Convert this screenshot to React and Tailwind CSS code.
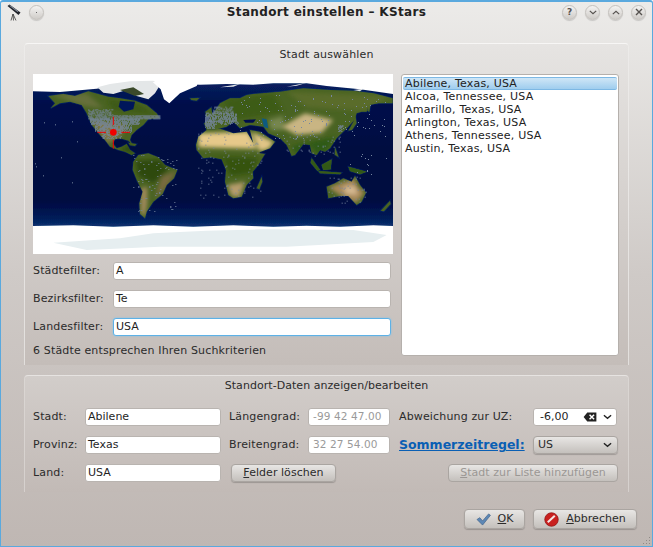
import React from 'react';

const font = { fontFamily: '"DejaVu Sans", sans-serif' };

// map shapes use the 1080x540 space of the viewBox
const landPaths = [
  // north america
  'M85,78 L130,72 L165,78 L205,64 L235,72 L265,80 L300,85 L345,92 L380,105 L410,130 L420,145 L385,148 L370,165 L350,180 L335,195 L330,210 L338,225 L325,212 L300,205 L285,208 L278,220 L290,235 L305,230 L320,222 L330,240 L345,250 L335,255 L315,245 L295,240 L270,230 L255,210 L240,195 L215,165 L200,130 L185,105 L150,95 L120,100 L92,115 L105,100 Z',
  // south america
  'M340,275 L355,255 L385,250 L415,262 L435,285 L472,300 L462,325 L440,345 L428,372 L400,395 L380,425 L375,445 L360,432 L358,400 L368,365 L350,330 L338,300 Z',
  // africa
  'M528,225 L535,200 L560,180 L600,176 L640,190 L680,185 L700,220 L720,250 L735,252 L715,285 L698,305 L700,325 L680,345 L665,380 L640,385 L625,375 L615,335 L618,300 L605,268 L575,262 L550,265 L530,240 Z',
  // arabia
  'M690,180 L720,185 L765,215 L750,235 L715,248 L700,220 Z',
  // eurasia
  'M552,160 L565,150 L580,128 L600,100 L630,85 L660,85 L680,75 L700,72 L780,65 L850,55 L930,60 L1000,62 L1060,70 L1118,85 L1118,100 L1075,100 L1045,105 L1040,125 L1025,125 L1010,130 L1003,150 L985,170 L965,190 L950,205 L930,235 L915,245 L900,240 L890,255 L875,250 L870,225 L850,222 L825,255 L815,258 L800,225 L780,205 L745,190 L730,170 L690,165 L660,175 L640,155 L620,170 L590,178 L560,180 Z',
  // australia
  'M920,350 L945,340 L970,325 L995,335 L1005,318 L1020,345 L1038,368 L1025,395 L1010,405 L985,378 L960,378 L925,385 Z',
  // islands
  'M710,355 L725,320 L727,335 L718,358 Z',
  'M875,265 L900,300 L892,302 L872,278 Z',
  'M905,285 L935,268 L932,298 L910,300 Z',
  'M895,303 L965,308 L960,313 L900,310 Z',
  'M985,290 L1040,305 L1020,313 L990,303 Z',
  'M945,230 L956,262 L944,254 Z',
  'M996,180 L1010,160 L1006,135 L1000,155 L985,182 Z',
  'M1045,100 L1052,102 L1048,126 L1042,122 Z',
  'M1082,422 L1110,392 L1112,402 L1092,424 Z',
  'M510,85 L538,84 L530,92 L514,90 Z',
  'M556,125 L574,112 L578,140 L558,142 Z',
  'M325,218 L350,222 L345,228 L330,226 Z',
];

const patches = [
  { fill: '#66703a', d: 'M90,72 L200,70 L250,115 L190,108 Z' },
  { fill: '#3d5a14', d: 'M260,88 L350,100 L410,135 L280,120 Z' },
  { fill: '#7e7746', d: 'M215,150 L320,165 L300,200 L262,222 L232,180 Z' },
  { fill: '#2f4e0c', d: 'M330,222 L350,255 L300,240 Z' },
  { fill: '#2e480a', d: 'M345,272 L420,268 L445,300 L400,340 L355,318 Z' },
  { fill: '#7a6a40', d: 'M425,320 L470,302 L440,350 L405,385 Z' },
  { fill: '#a08a5c', d: 'M362,355 L382,350 L382,400 L375,440 L362,428 Z' },
  { fill: '#e6c98a', d: 'M535,190 L685,185 L712,236 L535,232 Z' },
  { fill: '#34520c', d: 'M550,258 L715,264 L695,310 L630,318 L610,268 Z' },
  { fill: '#b59c6c', d: 'M622,345 L675,335 L658,382 L634,378 Z' },
  { fill: '#e0c486', d: 'M695,185 L762,216 L745,238 L718,244 Z' },
  { fill: '#3d5c14', d: 'M605,90 L760,72 L790,125 L650,148 Z' },
  { fill: '#5a6c2c', d: 'M800,65 L1110,78 L1035,122 L860,112 Z' },
  { fill: '#c9b583', d: 'M785,170 L855,130 L940,150 L905,188 L830,195 Z' },
  { fill: '#76864e', d: 'M745,150 L790,138 L790,180 L752,180 Z' },
  { fill: '#2f5a12', d: 'M815,228 L945,200 L918,245 L890,252 L870,225 L828,252 Z' },
  { fill: '#305816', d: 'M860,262 L1040,285 L1040,318 L880,310 Z' },
  { fill: '#a8895a', d: 'M925,352 L1002,325 L1034,370 L1008,400 L960,376 Z' },
  { fill: '#d4b890', d: 'M970,350 L1006,348 L1012,374 L978,372 Z' },
  { fill: '#3a5812', d: 'M1003,322 L1020,346 L1034,366 L1012,350 Z' },
];

const arctic = [
  'M232,52 L270,42 L330,34 L400,32 L420,45 L405,70 L385,88 L350,78 L320,60 L280,72 L250,68 Z',
  'M1000,60 L1030,56 L1020,64 Z',
  'M600,52 L660,42 L640,50 Z',
  'M800,50 L860,38 L830,47 Z',
];

// small fixed random so the city dots stay put between renders
function rnd(seed) {
  let s = seed;
  return () => {
    s = (s * 16807) % 2147483647;
    return s / 2147483647;
  };
}

function cityDots() {
  const r = rnd(4711);
  const out = [];
  const grid = (x, y, w, h, chance) => {
    for (let gy = y; gy < y + h; gy += 3) {
      for (let gx = x; gx < x + w; gx += 3) {
        if (r() < chance) out.push([gx, gy]);
      }
    }
  };
  // usa and southern canada
  grid(205, 118, 75, 30, 0.6);
  grid(280, 136, 140, 10, 0.85);
  grid(210, 146, 150, 18, 0.8);
  grid(225, 164, 110, 22, 0.65);
  grid(245, 186, 60, 20, 0.4);
  // europe
  grid(580, 110, 60, 20, 0.45);
  grid(555, 128, 95, 25, 0.7);
  grid(555, 152, 30, 22, 0.75);
  grid(585, 152, 70, 12, 0.4);
  // japan, korea
  grid(955, 165, 15, 20, 0.6);
  // everywhere else, thin
  grid(660, 75, 440, 130, 0.018);
  grid(800, 200, 160, 60, 0.05);
  grid(535, 185, 190, 200, 0.03);
  grid(340, 255, 130, 170, 0.025);
  grid(920, 320, 120, 85, 0.03);
  grid(45, 100, 140, 250, 0.004);
  grid(960, 240, 140, 80, 0.012);
  return out;
}

const dots = cityDots();

const WorldMap = () => (
  <svg viewBox="39 12 1080 540" className="w-[360px] h-[180px] block shrink-0">
    <defs>
      <linearGradient id="sea" x1="0" y1="0" x2="0" y2="1">
        <stop offset="0" stopColor="#08215f" />
        <stop offset="0.15" stopColor="#020d4a" />
        <stop offset="0.45" stopColor="#010941" />
        <stop offset="0.82" stopColor="#010941" />
        <stop offset="0.94" stopColor="#031c58" />
        <stop offset="1" stopColor="#083270" />
      </linearGradient>
      <clipPath id="land">
        {landPaths.map((d, i) => (
          <path key={i} d={d} />
        ))}
      </clipPath>
      <filter id="soft" x="-5%" y="-5%" width="110%" height="110%">
        <feGaussianBlur stdDeviation="7" />
      </filter>
      <filter id="edge" x="-5%" y="-5%" width="110%" height="110%">
        <feGaussianBlur stdDeviation="1.2" />
      </filter>
      <filter id="halo" x="-5%" y="-5%" width="110%" height="110%">
        <feGaussianBlur stdDeviation="2" />
      </filter>
    </defs>
    <rect x="39" y="12" width="1080" height="540" fill="#ffffff" />
    <g filter="url(#edge)">
      <path d="M39,64 L120,66 L230,56 L300,44 L420,40 L540,44 L620,42 L700,44 L760,40 L860,40 L920,48 L1020,58 L1119,72 L1119,468 L1060,466 L960,470 L860,467 L760,470 L640,466 L520,470 L400,466 L280,470 L160,466 L39,468 Z" fill="url(#sea)" />
      <g filter="url(#halo)" fill="none" stroke="#0a4a8a" strokeWidth="5" opacity="0.3">
        {landPaths.map((d, i) => (
          <path key={i} d={d} />
        ))}
      </g>
      {landPaths.map((d, i) => (
        <path key={i} d={d} fill="#4a6420" />
      ))}
    </g>
    <g clipPath="url(#land)">
      <g filter="url(#soft)">
        {patches.map((p, i) => (
          <path key={i} d={p.d} fill={p.fill} />
        ))}
      </g>
    </g>
    <g filter="url(#edge)">
      {arctic.map((d, i) => (
        <path key={i} d={d} fill="#e4e7e8" />
      ))}
      <path d="M300,60 L340,52 L372,72 L345,78 Z" fill="#3a4a2a" />
      <path d="M300,92 L345,95 L340,118 L312,125 L296,110 Z" fill="#06185a" />
      <path d="M670,150 L708,148 L700,158 L676,158 Z" fill="#04104c" />
      <path d="M725,145 L740,148 L745,175 L732,172 Z" fill="#0d5a80" />
      <path d="M398,36 L470,30 L535,35 L530,48 L480,70 L448,100 L432,88 L422,58 Z" fill="#ffffff" />
      <path d="M100,518 L300,505 L400,490 L560,482 L720,478 L1000,480 L1100,495 L1060,516 L800,530 L420,530 L200,540 Z" fill="#e6eef0" />
    </g>
    {dots.map(([x, y], i) => (
      <rect key={i} x={x} y={y} width="3" height="3" fill="#76869f" />
    ))}
    <path d="M232,187 H258 M304,187 H330 M280,140 V165 M280,210 V236" stroke="#f00000" strokeWidth="3" />
    <circle cx="280" cy="187" r="10" fill="#f00000" />
  </svg>
);

const Chevron = ({ up, className }) => (
  <svg viewBox="0 0 10 6" className={className} fill="none" stroke="currentColor" strokeWidth="1.5">
    <path d={up ? 'M1,5 L5,1.5 L9,5' : 'M1,1 L5,4.5 L9,1'} />
  </svg>
);

const WinButton = ({ children }) => (
  <div className="w-[15px] h-[15px] rounded-full border border-[#c4c1bd] bg-gradient-to-b from-[#f4f3f2] to-[#cfccc8] flex items-center justify-center text-[#55514e] shadow-[0_1px_1px_rgba(0,0,0,0.15)]">
    {children}
  </div>
);

const Telescope = () => (
  <svg viewBox="0 0 14 17" className="w-[14px] h-[17px]">
    <path d="M0.5,2 L2.5,0.5 L13.5,8.6 L11.5,11 Z" fill="#20232a" />
    <path d="M2,1.6 L3.5,1.4 L11.5,7.4 L10.5,8 Z" fill="#8b93a0" />
    <path d="M6,10 L4,16.5 M6,10 L6.5,16.5 M6,10 L9,16.5" stroke="#3a3a3a" strokeWidth="0.8" fill="none" />
  </svg>
);

const Field = ({ value, w, muted, focus }) => (
  <div
    className={`h-[18px] ${w} rounded-[3px] bg-white flex items-center overflow-hidden whitespace-nowrap ${muted ? 'pl-[4px] text-[10.5px] text-[#9a9a9a] tracking-[0.1px]' : 'pl-[2px] text-[11px] text-[#1f1f1f]'} ${focus ? 'border border-[#5db1e6] shadow-[0_0_2px_#7cc3ee]' : 'border border-[#b9b4b0]'}`}
  >
    {value}
  </div>
);

const Label = ({ children, className = '' }) => (
  <div className={`text-[11px] tracking-[0.15px] text-[#2b2b2b] leading-[18px] whitespace-nowrap ${className}`}>{children}</div>
);

const Btn = ({ children, className = '' }) => (
  <div className={`rounded-[4px] border border-[#aaa5a1] bg-gradient-to-b from-[#e8e6e4] to-[#c4c0bc] flex items-center justify-center text-[11px] tracking-[0.05px] whitespace-nowrap shadow-[0_1px_1px_rgba(0,0,0,0.2)] ${className}`}>
    {children}
  </div>
);

const cities = ['Abilene, Texas, USA', 'Alcoa, Tennessee, USA', 'Amarillo, Texas, USA', 'Arlington, Texas, USA', 'Athens, Tennessee, USA', 'Austin, Texas, USA'];

const filters = [
  ['Städtefilter:', 'A'],
  ['Bezirksfilter:', 'Te'],
  ['Landesfilter:', 'USA'],
];

export default function App() {
  return (
    <div style={font} className="relative w-[653px] h-[547px] overflow-hidden border-x border-b border-t-2 border-[#5aa9de] rounded-t-[3px] bg-gradient-to-b from-[#ecebe9] via-[#cfcac7] to-[#bfb7b3] flex flex-col text-[#2b2b2b]">
      {/* title bar */}
      <div className="h-[20px] grid grid-cols-[1fr_auto_1fr] items-center pl-[6px] pr-[6px] shrink-0">
        <div className="flex items-center">
          <Telescope />
          <div className="ml-[8px]">
            <WinButton><div className="w-[1px] h-[1px] bg-[#666]" /></WinButton>
          </div>
        </div>
        <div className="font-bold text-[12px] tracking-[0.35px] text-[#222] whitespace-nowrap">Standort einstellen – KStars</div>
        <div className="flex gap-[8px] justify-end">
          <WinButton><span className="text-[9px] font-bold leading-none">?</span></WinButton>
          <WinButton><Chevron className="w-[8px] h-[5px]" /></WinButton>
          <WinButton><Chevron up className="w-[8px] h-[5px]" /></WinButton>
          <WinButton>
            <svg viewBox="0 0 8 8" className="w-[8px] h-[8px]" stroke="currentColor" strokeWidth="1.4"><path d="M1,1 L7,7 M7,1 L1,7" /></svg>
          </WinButton>
        </div>
      </div>

      {/* city picker panel */}
      <div className="ml-[23px] mr-[23px] mt-[21px] h-[322px] shrink-0 rounded-t-[4px] border-t border-x border-t-[#f7f6f5] border-x-[#f0eeec]/70 bg-gradient-to-b from-[#e6e4e2] to-[#c4bdb9] px-[8px]">
        <div className="h-[20px] mt-[1px] text-center text-[11px] tracking-[0.15px] leading-[20px]">Stadt auswählen</div>
        <div className="flex gap-[8px] mt-[9px]">
          <div className="w-[360px] shrink-0">
            <WorldMap />
            <div className="mt-[8px] flex flex-col gap-[10px]">
              {filters.map(([label, value], i) => (
                <div key={label} className="flex items-center">
                  <Label className="w-[80px]">{label}</Label>
                  <Field value={value} w="w-[278px]" focus={i === 2} />
                </div>
              ))}
            </div>
            <Label className="mt-[6px]">6 Städte entsprechen Ihren Suchkriterien</Label>
          </div>
          <div className="w-[218px] h-[282px] rounded-[3px] border border-[#b5b0ac] bg-white pt-[2px] px-[1px] text-[11px] tracking-[0.2px] leading-[13px] text-[#222]">
            {cities.map((c, i) => (
              <div key={c} className={`px-[2px] h-[13px] whitespace-nowrap ${i === 0 ? 'rounded-[2px] border-y border-[#7db8e4] bg-gradient-to-b from-[#cfe6f6] to-[#9fcdee] flex items-center' : ''}`}>{c}</div>
            ))}
          </div>
        </div>
      </div>

      {/* location data panel */}
      <div className="ml-[23px] mr-[23px] mt-[10px] h-[117px] shrink-0 rounded-t-[4px] border-t border-x border-t-[#e6e3e1] border-x-[#dedad7]/70 bg-gradient-to-b from-[#d2cdca] to-[#c2bab6] px-[8px]">
        <div className="h-[20px] text-center text-[11px] tracking-[0.05px] leading-[20px]">Standort-Daten anzeigen/bearbeiten</div>
        <div className="mt-[12px] grid grid-cols-[52px_144px_79px_91px_134px_85px] grid-rows-[18px_18px_18px] gap-y-[10px]">
          <Label>Stadt:</Label>
          <Field value="Abilene" w="w-[136px]" />
          <Label>Längengrad:</Label>
          <Field value="-99 42 47.00" w="w-[82px]" muted />
          <Label>Abweichung zur UZ:</Label>
          <div className="h-[18px] w-[84px] rounded-[3px] bg-white border border-[#b9b4b0] flex items-center pl-[6px] pr-[4px] text-[11px] text-[#1f1f1f]">
            <span className="flex-1">-6,00</span>
            <svg viewBox="0 0 15 11" className="w-[14px] h-[10px] mr-[6px]">
              <path d="M0.5,5.5 L4.5,0.5 H14.5 V10.5 H4.5 Z" fill="#222" />
              <path d="M7,3 L12,8 M12,3 L7,8" stroke="#fff" strokeWidth="1.6" />
            </svg>
            <Chevron className="w-[9px] h-[6px] text-[#222]" />
          </div>

          <Label>Provinz:</Label>
          <Field value="Texas" w="w-[136px]" />
          <Label>Breitengrad:</Label>
          <Field value="32 27 54.00" w="w-[82px]" muted />
          <div className="text-[12.5px] font-bold underline text-[#0a5fb4] leading-[18px] whitespace-nowrap">Sommerzeitregel:</div>
          <Btn className="w-[85px] h-[18px] !justify-between pl-[4px] pr-[5px]">
            <span>US</span>
            <Chevron className="w-[9px] h-[6px] text-[#222]" />
          </Btn>

          <Label>Land:</Label>
          <Field value="USA" w="w-[136px]" />
          <Btn className="col-span-2 w-[105px] h-[18px] ml-[2px]"><span><u>F</u>elder löschen</span></Btn>
          <div className="col-span-2 flex justify-end">
            <Btn className="w-[170px] h-[18px] text-[#9b9794] !shadow-none"><span><u>S</u>tadt zur Liste hinzufügen</span></Btn>
          </div>
        </div>
      </div>

      {/* dialog buttons */}
      <div className="mt-[17px] pr-[15px] flex justify-end gap-[8px]">
        <Btn className="w-[61px] h-[20px] gap-[7px]">
          <svg viewBox="0 0 16 14" className="w-[15px] h-[13px]">
            <path d="M1,7 L4,5 L7,8.5 L13.5,1 L15.5,2.5 L7,13 Z" fill="#5c87b5" stroke="#3c5f86" strokeWidth="0.7" />
          </svg>
          <span><u>O</u>K</span>
        </Btn>
        <Btn className="w-[104px] h-[20px] gap-[7px]">
          <svg viewBox="0 0 16 16" className="w-[15px] h-[15px]">
            <circle cx="8" cy="8" r="7.2" fill="#c9201f" stroke="#8f1414" strokeWidth="0.8" />
            <path d="M4,11 L11.5,4" stroke="#f4e6e4" strokeWidth="2.2" />
          </svg>
          <span><u>A</u>bbrechen</span>
        </Btn>
      </div>

      {/* resize grip */}
      <svg viewBox="0 0 8 8" className="absolute right-[1px] bottom-[1px] w-[8px] h-[8px]" fill="#8f8a86">
        <rect x="6" y="0" width="1" height="1" /><rect x="3" y="3" width="1" height="1" /><rect x="6" y="3" width="1" height="1" />
        <rect x="0" y="6" width="1" height="1" /><rect x="3" y="6" width="1" height="1" /><rect x="6" y="6" width="1" height="1" />
      </svg>
    </div>
  );
}
